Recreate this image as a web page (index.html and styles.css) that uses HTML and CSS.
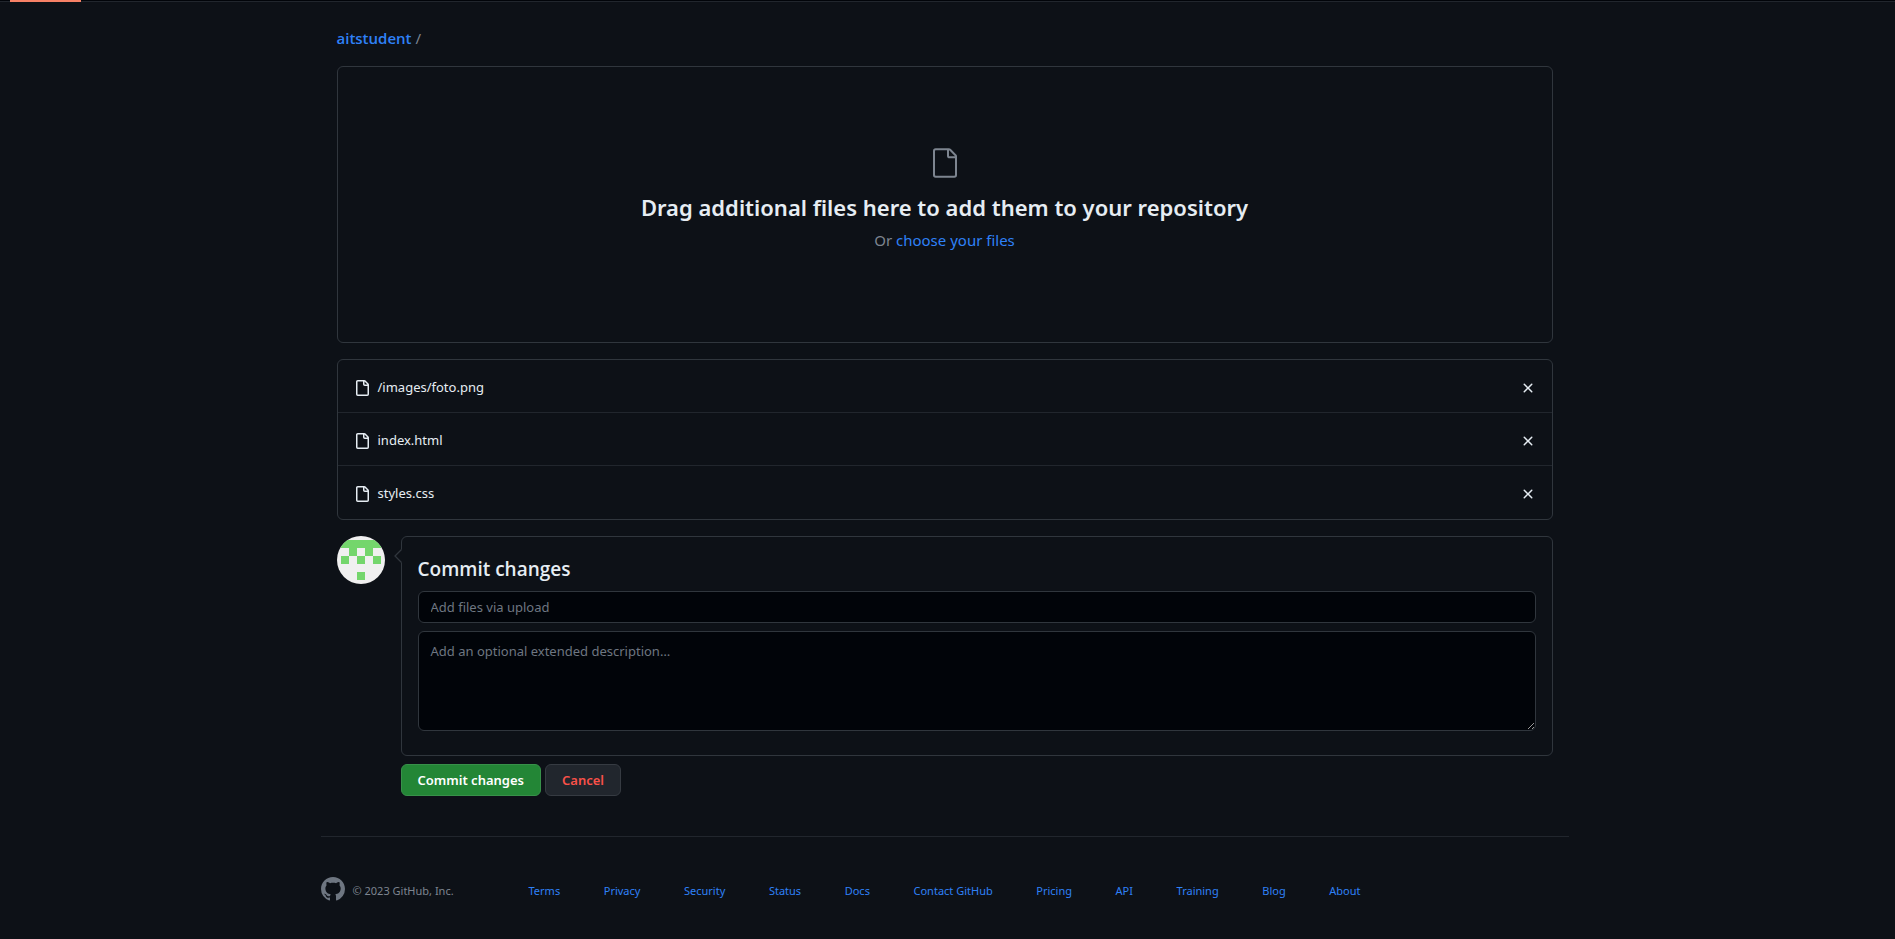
FILE: index.html
```html
<!DOCTYPE html>
<html lang="en">
<head>
<meta charset="utf-8">
<title>Upload files</title>
<link rel="stylesheet" href="styles.css">
</head>
<body>
<svg class="sprite" aria-hidden="true">
  <symbol id="file-16" viewBox="0 0 16 16"><path d="M2 1.75C2 .784 2.784 0 3.75 0h6.586c.464 0 .909.184 1.237.513l2.914 2.914c.329.328.513.773.513 1.237v9.586A1.75 1.75 0 0 1 13.25 16h-9.5A1.75 1.75 0 0 1 2 14.25Zm1.75-.25a.25.25 0 0 0-.25.25v12.5c0 .138.112.25.25.25h9.5a.25.25 0 0 0 .25-.25V6h-2.75A1.75 1.75 0 0 1 9 4.25V1.5Zm6.75.062V4.25c0 .138.112.25.25.25h2.688l-.011-.013-2.914-2.914-.013-.011Z"/></symbol>
  <symbol id="file-24" viewBox="0 0 24 24"><path d="M3 3a2 2 0 0 1 2-2h9.982a2 2 0 0 1 1.414.586l4.018 4.018A2 2 0 0 1 21 7.018V21a2 2 0 0 1-2 2H5a2 2 0 0 1-2-2Zm2-.5a.5.5 0 0 0-.5.5v18a.5.5 0 0 0 .5.5h14a.5.5 0 0 0 .5-.5V8.5h-4a2 2 0 0 1-2-2v-4Zm10 0v4a.5.5 0 0 0 .5.5h4a.5.5 0 0 0-.146-.336l-4.018-4.018A.5.5 0 0 0 15 2.5Z"/></symbol>
  <symbol id="x-16" viewBox="0 0 16 16"><path d="M3.72 3.72a.75.75 0 0 1 1.06 0L8 6.94l3.22-3.22a.749.749 0 0 1 1.275.326.749.749 0 0 1-.215.734L9.06 8l3.22 3.22a.749.749 0 0 1-.326 1.275.749.749 0 0 1-.734-.215L8 9.06l-3.22 3.22a.751.751 0 0 1-1.042-.018.751.751 0 0 1-.018-1.042L6.94 8 3.72 4.78a.75.75 0 0 1 0-1.06Z"/></symbol>
</svg>
<div class="nav-edge"><div class="nav-selected"></div></div>
<main class="container">
  <div class="breadcrumb"><a href="#">aitstudent</a> <span>/</span></div>
  <section class="dropzone">
    <svg class="dropzone-icon" aria-hidden="true"><use href="#file-24"/></svg>
    <h2>Drag additional files here to add them to your repository</h2>
    <p>Or <a href="#">choose your files</a></p>
  </section>
  <ul class="files">
    <li><svg class="icon" aria-hidden="true"><use href="#file-16"/></svg><span>/images/foto.png</span><button type="button" aria-label="Remove /images/foto.png"><svg class="icon" aria-hidden="true"><use href="#x-16"/></svg></button></li>
    <li><svg class="icon" aria-hidden="true"><use href="#file-16"/></svg><span>index.html</span><button type="button" aria-label="Remove index.html"><svg class="icon" aria-hidden="true"><use href="#x-16"/></svg></button></li>
    <li><svg class="icon" aria-hidden="true"><use href="#file-16"/></svg><span>styles.css</span><button type="button" aria-label="Remove styles.css"><svg class="icon" aria-hidden="true"><use href="#x-16"/></svg></button></li>
  </ul>
  <form class="commit">
    <svg class="avatar" viewBox="0 0 48 48" role="img" aria-label="User avatar">
      <rect width="48" height="48" fill="#f0f0f0"/>
      <path fill="#74d66c" d="M4 4h40v8H4zM12 12h8v8h-8zM28 12h8v8h-8zM4 20h8v8H4zM20 20h8v8h-8zM36 20h8v8h-8zM20 36h8v8h-8z"/>
    </svg>
    <div class="commit-main">
      <div class="commit-box">
        <svg class="caret" viewBox="0 0 8 16" aria-hidden="true"><path d="M8 1v14L1 8Z" fill="#0d1117"/><path d="M7.500 1.500 1 8l6.500 6.500" fill="none" stroke="#30363d" stroke-width="1.300"/></svg>
        <h3>Commit changes</h3>
        <input type="text" aria-label="Commit message" placeholder="Add files via upload">
        <textarea aria-label="Extended description" placeholder="Add an optional extended description…"></textarea>
      </div>
      <div class="actions">
        <button type="submit" class="btn btn-primary">Commit changes</button>
        <button type="button" class="btn btn-danger">Cancel</button>
      </div>
    </div>
  </form>
</main>
<footer class="footer">
  <div class="footer-row">
    <div class="copyright">
      <svg class="mark" viewBox="0 0 16 16" aria-hidden="true"><path d="M8 0c4.420 0 8 3.580 8 8a8.013 8.013 0 0 1-5.450 7.590c-.4.080-.55-.17-.55-.38 0-.27.010-1.130.010-2.200 0-.75-.25-1.230-.54-1.480 1.780-.2 3.650-.88 3.650-3.950 0-.88-.31-1.590-.82-2.150.080-.2.360-1.020-.080-2.120 0 0-.67-.22-2.200.82-.64-.18-1.320-.27-2-.27-.68 0-1.360.090-2 .27-1.530-1.030-2.200-.82-2.200-.82-.44 1.100-.16 1.920-.080 2.120-.51.560-.82 1.280-.82 2.150 0 3.060 1.860 3.750 3.640 3.950-.23.200-.44.550-.51 1.070-.46.210-1.610.55-2.330-.66-.15-.24-.6-.83-1.230-.82-.67.010-.27.380.010.530.34.190.73.900.82 1.130.16.450.68 1.310 2.690.94 0 .67.010 1.300.010 1.490 0 .21-.15.450-.55.380A7.995 7.995 0 0 1 0 8c0-4.420 3.580-8 8-8Z"/></svg>
      <span>© 2023 GitHub, Inc.</span>
    </div>
    <nav class="links" aria-label="Footer">
      <a href="#">Terms</a><a href="#">Privacy</a><a href="#">Security</a><a href="#">Status</a><a href="#">Docs</a><a href="#">Contact GitHub</a><a href="#">Pricing</a><a href="#">API</a><a href="#">Training</a><a href="#">Blog</a><a href="#">About</a>
    </nav>
  </div>
</footer>
</body>
</html>
```
FILE: styles.css
```css
* { box-sizing: border-box; }
body {
  margin: 0;
  background: #0d1117;
  color: #e6edf3;
  font: 13px/20px "Noto Sans", "Open Sans", sans-serif;
}
h2, h3, p, ul { margin: 0; padding: 0; }
a { color: #2f81f7; text-decoration: none; }
button, input, textarea { font: inherit; }
svg { display: block; fill: currentColor; }
.sprite { position: absolute; width: 0; height: 0; }

.nav-edge {
  height: 2px;
  padding-left: 10px;
  background: linear-gradient(#010409 50%, #21262d 50%);
}
.nav-selected { width: 71px; height: 2px; background: #f78166; }

.container {
  max-width: 1280px;
  margin: 0 auto;
  padding: 24px 35px 40px 29px;
}
.breadcrumb { font-size: 15px; line-height: 24px; color: #7d8590; }
.breadcrumb a { font-family: "Open Sans", sans-serif; font-weight: 600; }

.dropzone {
  display: flex;
  flex-direction: column;
  align-items: center;
  margin-top: 16px;
  padding: 80px 32px 90px;
  border: 1px solid #30363d;
  border-radius: 6px;
  text-align: center;
}
.dropzone-icon { width: 32px; height: 32px; color: #7d8590; }
.dropzone h2 { margin-top: 10px; font-size: 22px; line-height: 36px; font-weight: 600; }
.dropzone p { font-size: 15px; line-height: 24px; color: #7d8590; margin-top: 3px; }

.files {
  margin-top: 16px;
  border: 1px solid #30363d;
  border-radius: 6px;
  list-style: none;
}
.files li { display: flex; align-items: center; gap: 8px; height: 53px; padding: 3px 16px 0; }
.files li:first-child { height: 52px; }
.files li:last-child { height: 54px; }
.files li + li { border-top: 1px solid #21262d; }
.files span { flex: 1; padding-bottom: 2px; }
.files button { padding: 0; border: 0; background: none; color: inherit; cursor: pointer; }
.icon { width: 16px; height: 16px; }

.commit { display: flex; gap: 16px; margin-top: 16px; }
.avatar { flex: none; width: 48px; height: 48px; border-radius: 50%; }
.commit-main { flex: 1; }
.commit-box {
  position: relative;
  padding: 18px 16px 24px;
  border: 1px solid #30363d;
  border-radius: 6px;
}
.caret { position: absolute; left: -8px; top: 11px; width: 8px; height: 16px; }
.commit-box h3 { font-family: "Open Sans", sans-serif; font-size: 19px; line-height: 28px; font-weight: 600; }
.commit-box input, .commit-box textarea {
  display: block;
  width: 100%;
  margin-top: 8px;
  padding: 0 12px;
  border: 1px solid #30363d;
  border-radius: 6px;
  background: #010409;
  color: #e6edf3;
}
.commit-box input { height: 32px; }
.commit-box textarea { height: 100px; padding: 9px 12px; resize: vertical; }
::placeholder { color: #6e7681; opacity: 1; }

.actions { display: flex; gap: 4px; margin-top: 8px; }
.btn {
  height: 32px;
  padding: 0 16px;
  border: 1px solid #363b42;
  border-radius: 6px;
  font-weight: 600;
  cursor: pointer;
}
.btn-primary { background: #238636; border-color: #38914a; color: #fff; }
.btn-danger { background: #21262d; color: #f85149; }

.footer { padding-right: 6px; font-size: 11px; }
.footer-row {
  display: flex;
  align-items: center;
  max-width: 1248px;
  margin: 0 auto;
  padding: 40px 0;
  border-top: 1px solid #21262d;
}
.copyright { display: flex; align-items: center; gap: 8px; width: 208px; color: #7d8590; }
.copyright span, .links { padding-top: 4px; }
.mark { width: 24px; height: 24px; color: #6e7681; }
.links { display: flex; justify-content: space-between; width: 832px; }
```
